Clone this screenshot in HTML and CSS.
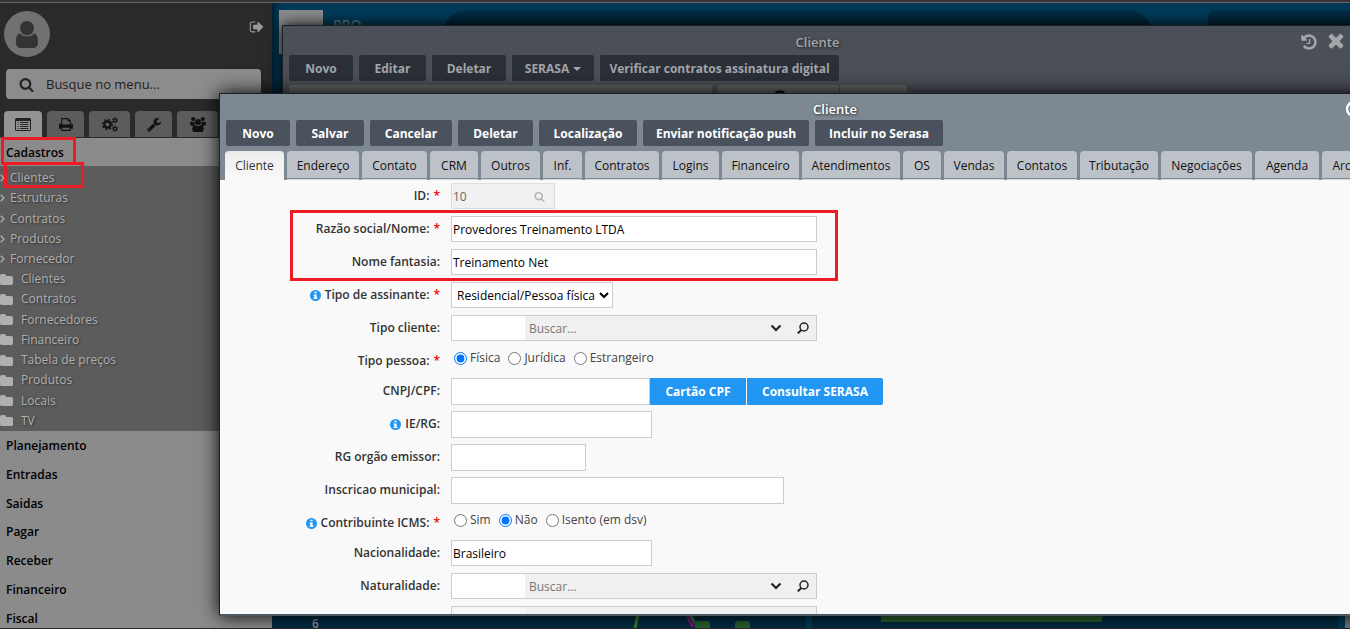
FILE: index.html
```html
<!DOCTYPE html>
<html lang="pt-BR">
<head>
<meta charset="utf-8">
<meta name="viewport" content="width=device-width, initial-scale=1">
<title>Cliente</title>
<link rel="stylesheet" href="styles.css">
</head>
<body>
<svg class="sprite" aria-hidden="true">
  <symbol id="i-history" viewBox="0 0 1792 1792"><path d="M1664 896q0 156-61 298t-164 245-245 164-298 61q-172 0-327-72.500t-264-204.500q-7-10-6.500-22.500t8.500-20.500l137-138q10-9 25-9 16 2 23 12 73 95 179 147t225 52q104 0 198.500-40.500t163.500-109.500 109.500-163.500 40.500-198.500-40.500-198.500-109.500-163.500-163.500-109.500-198.500-40.500q-98 0-188 35.500t-160 101.500l137 138q31 30 14 69-17 40-59 40h-448q-26 0-45-19t-19-45v-448q0-42 40-59 39-17 69 14l130 129q107-101 244.500-156.500t284.500-55.500q156 0 298 61t245 164 164 245 61 298zm-640-288v448q0 14-9 23t-23 9h-320q-14 0-23-9t-9-23v-64q0-14 9-23t23-9h224v-352q0-14 9-23t23-9h64q14 0 23 9t9 23z"/></symbol>
  <symbol id="i-times" viewBox="250 250 1292 1292"><path d="M1490 1194q0 40-28 68l-136 136q-28 28-68 28t-68-28l-294-294-294 294q-28 28-68 28t-68-28l-136-136q-28-28-28-68t28-68l294-294-294-294q-28-28-28-68t28-68l136-136q28-28 68-28t68 28l294 294 294-294q28-28 68-28t68 28l136 136q28 28 28 68t-28 68l-294 294 294 294q28 28 28 68z"/></symbol>
  <symbol id="i-help" viewBox="0 0 18 18"><g fill="none" stroke="currentColor" stroke-width="2.400"><circle cx="9" cy="9" r="7"/><path d="M6.700 7.200Q7 5.200 9 5.200t2.200 1.800Q11.200 8.600 9 9.400v1"/></g><circle cx="9" cy="12.500" r="1.200"/></symbol>
  <symbol id="i-signout" viewBox="0 200 1700 1400"><path d="M704 1440q0 4 1 20t.5 26.500-3 23.500-10 19.500-20.500 6.500h-320q-119 0-203.500-84.500t-84.500-203.500v-704q0-119 84.500-203.500t203.500-84.500h320q13 0 22.500 9.500t9.500 22.500q0 4 1 20t.5 26.500-3 23.500-10 19.500-20.500 6.500h-320q-66 0-113 47t-47 113v704q0 66 47 113t113 47h312l11.500 1 11.500 3 8 5.500 7 9 2 13.500zm928-544q0 26-19 45l-544 544q-19 19-45 19t-45-19-19-45v-288h-448q-26 0-45-19t-19-45v-384q0-26 19-45t45-19h448v-288q0-26 19-45t45-19 45 19l544 544q19 19 19 45z"/></symbol>
  <symbol id="i-search" viewBox="0 0 1792 1792"><path d="M1216 832q0-185-131.500-316.500t-316.500-131.500-316.500 131.500-131.500 316.500 131.500 316.500 316.500 131.500 316.500-131.500 131.500-316.500zm512 832q0 52-38 90t-90 38q-54 0-90-38l-343-342q-179 124-399 124-143 0-273.500-55.500t-225-150-150-225-55.500-273.500 55.500-273.500 150-225 225-150 273.500-55.500 273.500 55.500 225 150 150 225 55.500 273.500q0 220-124 399l343 343q37 37 37 90z"/></symbol>
  <symbol id="i-print" viewBox="0 0 1792 1792"><path d="M448 1536h896v-256h-896v256zm0-640h896v-384h-160q-40 0-68-28t-28-68v-160h-640v640zm1152 64q0-26-19-45t-45-19-45 19-19 45 19 45 45 19 45-19 19-45zm128 0v416q0 13-9.500 22.500t-22.500 9.500h-224v160q0 40-28 68t-68 28h-960q-40 0-68-28t-28-68v-160h-224q-13 0-22.500-9.500t-9.500-22.500v-416q0-79 56.500-135.500t135.500-56.500h64v-544q0-40 28-68t68-28h672q40 0 88 20t76 48l152 152q28 28 48 76t20 88v256h64q79 0 135.500 56.500t56.500 135.500z"/></symbol>
  <symbol id="i-wrench" viewBox="0 0 1792 1792"><path d="M448 1472q0-26-19-45t-45-19-45 19-19 45 19 45 45 19 45-19 19-45zm644-420l-682 682q-37 37-90 37-52 0-91-37l-106-108q-38-36-38-90 0-53 38-91l681-681q39 98 114.500 173.500t173.500 114.500zm634-435q0 39-23 106-47 134-164.500 217.500t-258.500 83.500q-185 0-316.500-131.500t-131.500-316.500 131.500-316.500 316.500-131.500q58 0 121.500 16.500t107.500 46.500q16 11 16 28t-16 28l-293 169v224l193 107q5-3 79-48.500t135.500-81 70.500-35.500q15 0 23.500 10t8.500 25z"/></symbol>
  <symbol id="i-folder" viewBox="64 128 1664 1408"><path d="M1728 608v704q0 92-66 158t-158 66h-1216q-92 0-158-66t-66-158v-960q0-92 66-158t158-66h320q92 0 158 66t66 158v32h672q92 0 158 66t66 158z"/></symbol>
  <symbol id="i-list" viewBox="0 0 16 13"><path fill-rule="evenodd" d="M1.500 0h13A1.500 1.500 0 0 1 16 1.500v10a1.500 1.500 0 0 1-1.500 1.500h-13A1.500 1.500 0 0 1 0 11.500v-10A1.500 1.500 0 0 1 1.500 0zM1 3v8.500q0 .5.500.5h13q.5 0 .5-.5V3z"/><path d="M2.500 4h1v1h-1zM2.500 6h1v1h-1zM2.500 8h1v1h-1zM2.500 10h1v1h-1zM5 4h8.500v1H5zM5 6h8.500v1H5zM5 8h8.500v1H5zM5 10h8.500v1H5z"/></symbol>
  <symbol id="i-cogs" viewBox="0 0 16 15"><g fill="none" stroke="currentColor"><circle cx="5.500" cy="7.500" r="3.200" stroke-width="2.200"/><circle cx="5.500" cy="7.500" r="4.900" stroke-width="1.500" stroke-dasharray="1.900 1.950"/><circle cx="13" cy="3.200" r="1.600" stroke-width="1.200"/><circle cx="13" cy="3.200" r="2.500" stroke-width="1" stroke-dasharray="1.300 1.320"/><circle cx="13" cy="11.800" r="1.600" stroke-width="1.200"/><circle cx="13" cy="11.800" r="2.500" stroke-width="1" stroke-dasharray="1.300 1.320"/></g></symbol>
  <symbol id="i-users" viewBox="0 0 16 15"><circle cx="3.200" cy="2.100" r="2.100"/><circle cx="12.800" cy="2.100" r="2.100"/><circle cx="8" cy="5" r="3"/><path d="M0 7.300C0 5.500.5 4.500 1.500 4.500q1.700 1 2.900.1Q4.200 6.500 5.200 7.700 3.800 7.600 3 8.800H1.500Q0 8.700 0 7.300zM16 7.300c0-1.800-.5-2.800-1.500-2.800q-1.700 1-2.900.1.200 1.900-.8 3.100 1.400-.1 2.200 1.100h1.500q1.500-.1 1.500-1.500zM2.300 12.700c0-2.700.6-4.600 2.600-4.600Q8 10 11.100 8.100c2 0 2.600 1.900 2.600 4.600Q13.700 15 11.500 15h-7q-2.200 0-2.200-2.300z"/></symbol>
  <symbol id="i-user" viewBox="0 0 22 27"><circle cx="11" cy="7" r="7"/><path d="M0 21C0 15.500 1.500 12 5.200 12q5.800 4 11.600 0C20.500 12 22 15.500 22 21q0 6-5 6H5q-5 0-5-6z"/><path d="M4 12.500q7 5 14 0" fill="none" stroke="#717171" stroke-width="1.200"/></symbol>
  <symbol id="i-chevron" viewBox="0 0 12 8"><path d="M1.500 1.500 6 6l4.500-4.500" fill="none" stroke="currentColor" stroke-width="2.200"/></symbol>
  <symbol id="i-lookup" viewBox="0 0 12 12"><g fill="none" stroke="currentColor"><circle cx="7" cy="5" r="4" stroke-width="1.500"/><path d="M4.200 8 .8 11.400" stroke-width="2"/></g></symbol>
  <symbol id="i-angle" viewBox="0 0 5 8"><path d="M.7.7 4 4 .7 7.300" fill="none" stroke="currentColor" stroke-width="1.300"/></symbol>
  <symbol id="i-caret" viewBox="0 0 8 4"><path d="M0 0h8L4 4z"/></symbol>
  <symbol id="i-info" viewBox="0 0 10 10"><circle cx="5" cy="5" r="5" fill="#2196f3"/><path fill="#fff" d="M4 1.500h2V3H4zM3.300 4H6v3h.7v1.200H3.300V7H4V5.200h-.7z"/></symbol>
</svg>

<div class="app">
  <aside class="sidebar">
    <div class="profile">
      <span class="avatar"><svg><use href="#i-user"/></svg></span>
      <button class="logout" type="button" aria-label="Sair"><svg><use href="#i-signout"/></svg></button>
    </div>
    <label class="menu-search">
      <svg><use href="#i-search"/></svg>
      <input type="text" placeholder="Busque no menu..." aria-label="Busque no menu">
    </label>
    <div class="menu-tabs">
      <button class="active" type="button" aria-label="Menu"><svg class="list-icon"><use href="#i-list"/></svg></button>
      <button type="button" aria-label="Imprimir"><svg><use href="#i-print"/></svg></button>
      <button type="button" aria-label="Configurações"><svg><use href="#i-cogs"/></svg></button>
      <button type="button" aria-label="Ferramentas"><svg><use href="#i-wrench"/></svg></button>
      <button type="button" aria-label="Usuários"><svg><use href="#i-users"/></svg></button>
    </div>
    <nav class="menu">
      <a class="section" href="#">Cadastros</a>
      <ul class="submenu">
        <li><a href="#"><svg class="angle"><use href="#i-angle"/></svg>Clientes</a></li>
        <li><a href="#"><svg class="angle"><use href="#i-angle"/></svg>Estruturas</a></li>
        <li><a href="#"><svg class="angle"><use href="#i-angle"/></svg>Contratos</a></li>
        <li><a href="#"><svg class="angle"><use href="#i-angle"/></svg>Produtos</a></li>
        <li><a href="#"><svg class="angle"><use href="#i-angle"/></svg>Fornecedor</a></li>
        <li><a href="#"><svg class="folder"><use href="#i-folder"/></svg>Clientes</a></li>
        <li><a href="#"><svg class="folder"><use href="#i-folder"/></svg>Contratos</a></li>
        <li><a href="#"><svg class="folder"><use href="#i-folder"/></svg>Fornecedores</a></li>
        <li><a href="#"><svg class="folder"><use href="#i-folder"/></svg>Financeiro</a></li>
        <li><a href="#"><svg class="folder"><use href="#i-folder"/></svg>Tabela de preços</a></li>
        <li><a href="#"><svg class="folder"><use href="#i-folder"/></svg>Produtos</a></li>
        <li><a href="#"><svg class="folder"><use href="#i-folder"/></svg>Locais</a></li>
        <li><a href="#"><svg class="folder"><use href="#i-folder"/></svg>TV</a></li>
      </ul>
      <div class="sections">
        <a class="section" href="#">Planejamento</a>
        <a class="section" href="#">Entradas</a>
        <a class="section" href="#">Saidas</a>
        <a class="section" href="#">Pagar</a>
        <a class="section" href="#">Receber</a>
        <a class="section" href="#">Financeiro</a>
        <a class="section" href="#">Fiscal</a>
      </div>
    </nav>
  </aside>

  <main class="dashboard">
    <header class="dash-top">
      <span class="logo"></span>
      <span class="brand">PRO —</span>
      <span class="dash-search"></span>
      <span class="dash-card"></span>
    </header>
    <footer class="dash-bottom">
      <span class="axis">6</span>
      <svg class="chart" viewBox="0 0 190 14"><path d="M2 14 5 0" stroke="#3f7f34" stroke-width="3"/><path d="m54 0 6 13" stroke="#6b1d72" stroke-width="4"/><path d="m57 0 5 9" stroke="#3f7f34" stroke-width="2"/><rect x="62" y="7" width="15" height="9" rx="3" fill="#2c6330"/><rect x="102" y="7" width="15" height="9" rx="3" fill="#2c6330"/><path d="M173 0h6v14h-6z" fill="#003d5e"/></svg>
      <span class="bar"></span>
      <span class="edge"></span>
    </footer>
  </main>

  <section class="window window-back" aria-label="Lista de clientes">
    <header class="title-bar">
      <h2>Cliente</h2>
      <div class="window-actions">
        <button type="button" aria-label="Histórico"><svg><use href="#i-history"/></svg></button>
        <button type="button" aria-label="Fechar"><svg><use href="#i-times"/></svg></button>
      </div>
    </header>
    <div class="toolbar">
      <button type="button">Novo</button>
      <button type="button">Editar</button>
      <button type="button">Deletar</button>
      <button type="button">SERASA <svg class="caret"><use href="#i-caret"/></svg></button>
      <button type="button">Verificar contratos assinatura digital</button>
    </div>
    <div class="filters"><span></span><span class="filter-icon"><svg><use href="#i-search"/></svg></span><span></span></div>
  </section>

  <section class="window window-front" aria-label="Cadastro de cliente">
    <header class="title-bar">
      <h1>Cliente</h1>
      <div class="window-actions">
        <button type="button" aria-label="Ajuda"><svg><use href="#i-help"/></svg></button>
        <button type="button" aria-label="Fechar cadastro"><svg><use href="#i-times"/></svg></button>
      </div>
    </header>
    <div class="toolbar">
      <button type="button">Novo</button>
      <button type="button">Salvar</button>
      <button type="button">Cancelar</button>
      <button type="button">Deletar</button>
      <button type="button">Localização</button>
      <button type="button">Enviar notificação push</button>
      <button type="button">Incluir no Serasa</button>
    </div>
    <div class="tabs">
      <button class="active" type="button">Cliente</button>
      <button type="button">Endereço</button>
      <button type="button">Contato</button>
      <button type="button">CRM</button>
      <button type="button">Outros</button>
      <button type="button">Inf.</button>
      <button type="button">Contratos</button>
      <button type="button">Logins</button>
      <button type="button">Financeiro</button>
      <button type="button">Atendimentos</button>
      <button type="button">OS</button>
      <button type="button">Vendas</button>
      <button type="button">Contatos</button>
      <button type="button">Tributação</button>
      <button type="button">Negociações</button>
      <button type="button">Agenda</button>
      <button type="button">Arquivos</button>
    </div>
    <form class="form">
      <div class="row">
        <label for="id">ID: <b class="req">*</b></label>
        <span class="id-field"><input id="id" type="text" value="10" readonly><svg><use href="#i-search"/></svg></span>
      </div>
      <div class="row">
        <label for="razao">Razão social/Nome: <b class="req">*</b></label>
        <input id="razao" class="w-long" type="text" value="Provedores Treinamento LTDA">
      </div>
      <div class="row">
        <label for="fantasia">Nome fantasia:</label>
        <input id="fantasia" class="w-long" type="text" value="Treinamento Net">
      </div>
      <div class="row">
        <label for="assinante"><svg class="info"><use href="#i-info"/></svg>Tipo de assinante: <b class="req">*</b></label>
        <select id="assinante"><option>Residencial/Pessoa física</option></select>
      </div>
      <div class="row">
        <label for="tipo">Tipo cliente:</label>
        <div class="lookup"><input id="tipo" type="text"><input class="find" type="text" placeholder="Buscar..." aria-label="Buscar tipo cliente"><button type="button" aria-label="Abrir lista"><svg class="chev"><use href="#i-chevron"/></svg></button><button type="button" aria-label="Pesquisar"><svg><use href="#i-lookup"/></svg></button></div>
      </div>
      <div class="row row-radio" role="radiogroup" aria-labelledby="l-pessoa">
        <span class="label" id="l-pessoa">Tipo pessoa: <b class="req">*</b></span>
        <div class="radios">
          <label><input type="radio" name="pessoa" checked>Física</label>
          <label><input type="radio" name="pessoa">Jurídica</label>
          <label><input type="radio" name="pessoa">Estrangeiro</label>
        </div>
      </div>
      <div class="row tall">
        <label for="cpf">CNPJ/CPF:</label>
        <div class="group"><input id="cpf" class="w-mid" type="text"><button type="button">Cartão CPF</button><button type="button">Consultar SERASA</button></div>
      </div>
      <div class="row tall">
        <label for="ie"><svg class="info"><use href="#i-info"/></svg>IE/RG:</label>
        <input id="ie" class="w-mid" type="text">
      </div>
      <div class="row tall">
        <label for="rg">RG orgão emissor:</label>
        <input id="rg" class="w-short" type="text">
      </div>
      <div class="row tall">
        <label for="insc">Inscricao municipal:</label>
        <input id="insc" class="w-wide" type="text">
      </div>
      <div class="row row-radio" role="radiogroup" aria-labelledby="l-icms">
        <span class="label" id="l-icms"><svg class="info"><use href="#i-info"/></svg>Contribuinte ICMS: <b class="req">*</b></span>
        <div class="radios">
          <label><input type="radio" name="icms">Sim</label>
          <label><input type="radio" name="icms" checked>Não</label>
          <label><input type="radio" name="icms">Isento (em dsv)</label>
        </div>
      </div>
      <div class="row">
        <label for="nac">Nacionalidade:</label>
        <input id="nac" class="w-mid" type="text" value="Brasileiro">
      </div>
      <div class="row">
        <label for="nat">Naturalidade:</label>
        <div class="lookup"><input id="nat" type="text"><input class="find" type="text" placeholder="Buscar..." aria-label="Buscar naturalidade"><button type="button" aria-label="Abrir lista de cidades"><svg class="chev"><use href="#i-chevron"/></svg></button><button type="button" aria-label="Pesquisar cidade"><svg><use href="#i-lookup"/></svg></button></div>
      </div>
      <div class="row">
        <span></span>
        <div class="lookup locked"><input type="text" aria-label="Código" disabled><input class="find" type="text" aria-label="Descrição" disabled></div>
      </div>
    </form>
  </section>

  <span class="mark mark-section"></span>
  <span class="mark mark-item"></span>
  <span class="mark mark-names"></span>
</div>
</body>
</html>
```
FILE: styles.css
```css
* { box-sizing: border-box; }

body {
  margin: 0;
  overflow: hidden;
  border-top: 2px solid #343434;
  background: #222;
  font: 12px/16px "Open Sans", "Noto Sans", sans-serif;
  color: #333;
}

button, input, select { font: inherit; color: inherit; }
button { border: 0; background: none; padding: 0; cursor: pointer; white-space: nowrap; }
a { color: inherit; text-decoration: none; }
svg { display: block; flex: none; fill: currentColor; width: 16px; height: 16px; }
.sprite { position: absolute; width: 0; height: 0; }

.app {
  position: relative;
  display: flex;
  height: calc(100vh - 2px);
  overflow: hidden;
  border-top: 1px solid #6c6868;
  border-bottom: 1px solid #262626;
}

/* Sidebar */
.sidebar {
  display: flex;
  flex-direction: column;
  width: 272px;
  flex: none;
  background: #2a2a2a;
}
.profile {
  display: flex;
  flex: none;
  justify-content: space-between;
  align-items: flex-start;
  padding: 8px 8px 0 4px;
  height: 66px;
}
.avatar {
  display: grid;
  place-items: center;
  width: 46px;
  height: 46px;
  border-radius: 50%;
  background: #717171;
  color: #333;
}
.avatar svg { width: 22px; height: 27px; }
.logout { margin-top: 10px; color: #999; }
.logout svg { width: 15px; height: 12px; }
.menu-search {
  display: flex;
  flex: none;
  align-items: center;
  gap: 12px;
  height: 30px;
  margin: 0 11px 0 6px;
  padding-left: 13px;
  border-radius: 4px;
  background: #8c8c8c;
  color: #222;
}
.menu-search svg { width: 15px; height: 15px; }
.menu-search input { width: 100%; border: 0; padding: 0; background: none; outline: 0; font-size: 13px; }
.menu-search input::placeholder { color: #222; opacity: 1; }
.menu-tabs {
  display: grid;
  flex: none;
  grid-template-columns: 38px 37px 41px 37px 41px;
  gap: 5px;
  height: 39px;
  padding: 12px 0 1px 4px;
}
.menu-tabs button {
  display: grid;
  place-items: center;
  border-radius: 4px 4px 0 0;
  background: #5c5c5c;
  color: #111;
}
.menu-tabs .active { background: #949494; color: #222; }
.menu-tabs svg { width: 16px; height: 15px; }
.menu-tabs .list-icon { height: 13px; }
.menu { flex: 1; background: #8b8b8b; }
.section {
  display: flex;
  align-items: center;
  padding: 2px 0 0 6px;
  font-weight: 600;
  color: #000;
}
.menu > .section { height: 28px; }
.submenu {
  display: grid;
  grid-auto-rows: 1fr;
  height: 265px;
  margin: 0;
  padding: 2px 0 0;
  list-style: none;
  background: #5c5c5c;
  color: #b0b0b0;
}
.submenu li { display: grid; }
.submenu a { display: flex; align-items: center; text-shadow: 1px 1px 2px #333; }
.submenu .angle { width: 5px; height: 8px; margin-right: 5px; }
.submenu .folder { width: 13px; height: 11px; margin-right: 8px; }
.sections { display: grid; grid-auto-rows: 1fr; height: 201px; }

/* Dashboard behind the windows */
.dashboard {
  display: flex;
  flex: 1;
  flex-direction: column;
  justify-content: space-between;
  min-width: 0;
  background: #003b5a;
}
.dash-top {
  display: flex;
  gap: 10px;
  height: 100px;
  padding: 7px 0 0 7px;
  box-shadow: inset 7px 0 7px -4px #001c2c;
}
.logo { width: 44px; height: 44px; background: #8b8b8b; }
.brand { width: 100px; padding-top: 7px; font-size: 14px; font-weight: 600; color: #5c7685; }
.dash-search { flex: 1; height: 60px; border-radius: 24px 24px 0 0; background: linear-gradient(#003049, #001a29 20px); }
.dash-card { width: 142px; margin-left: 46px; border-radius: 6px 0 0 0; background: linear-gradient(#003049, #001a29 20px); }
.dash-bottom {
  display: flex;
  gap: 8px;
  height: 14px;
  padding-left: 7px;
  overflow: hidden;
  background: #002b42;
}
.axis { width: 346px; padding-left: 33px; line-height: 20px; font-weight: 600; color: #8899a3; }
.chart { width: 190px; height: 14px; }
.bar { width: 221px; height: 8px; margin-left: 50px; background: #2c6330; }
.edge { width: 12px; margin-left: auto; background: linear-gradient(90deg, #003b5a 7px, #777 7px); }

/* Windows */
.window { position: absolute; display: flex; flex-direction: column; overflow: hidden; border: 1px solid #1c2025; }
.window > * { flex: none; }
.window-back { top: 22px; left: 282px; right: -8px; height: 560px; background: #4b4f57; color: #a3a5a8; box-shadow: 0 0 14px #000; }
.window-front { top: 90px; left: 219px; right: -101px; bottom: 12px; background: #f9f9f9; border-width: 1px 1px 2px; border-bottom-color: #4e5860; box-shadow: 0 0 18px #000; }

.title-bar {
  display: grid;
  grid-template-columns: 1fr auto 1fr;
  align-items: center;
}
.title-bar h1, .title-bar h2 { grid-column: 2; margin: 0; font-size: 13px; font-weight: 600; line-height: 18px; text-shadow: 1px 1px 3px #222; }
.window-actions { display: flex; justify-content: flex-end; gap: 10px; }
.window-actions svg { width: 18px; height: 18px; }
.window-actions button:last-child svg { width: 16px; height: 18px; }
.window-back .title-bar { height: 29px; padding: 3px 13px 0 8px; }

.toolbar { display: grid; gap: 6px; }
.toolbar button {
  display: flex;
  align-items: center;
  justify-content: center;
  gap: 4px;
  height: 26px;
  padding-top: 1px;
  border-radius: 2px;
  font-weight: 700;
}
.window-back .toolbar { grid-template-columns: 64px 67px 74px 82px 239px; padding-left: 6px; }
.window-back .toolbar button { background: #2b3038; }
.toolbar .caret { width: 8px; height: 4px; }
.filters { display: grid; grid-template-columns: 423px 126px 67px; column-gap: 1px; padding: 4px 0 0 6px; }
.filters span { height: 20px; background: #626466; border-radius: 2px 2px 0 0; }
.filters .filter-icon { margin-left: 5px; padding: 4px 0 0 55px; color: #000; }

.window-front .title-bar { height: 26px; padding: 4px 61px 0; background: #7e8892; color: #fff; }
.window-front .toolbar {
  grid-template-columns: 64px 68px 82px 75px 98px 166px 128px;
  padding-left: 6px;
  background: #7e8892;
  color: #fff;
}
.window-front .toolbar button { background: #49525d; }
.tabs {
  display: grid;
  grid-template-columns: 59px 72px 65px 48px 59px 39px 74px 57px 77px 98px 38px 60px 70px 78px 91px 64px 70px;
  column-gap: 3px;
  height: 34px;
  padding: 5px 0 0 5px;
  background: #7e8892;
}
.tabs button {
  border-radius: 4px 4px 0 0;
  background: linear-gradient(#bdc2c9 27px, #7e8892 27px, #7e8892 28px, #d5d8dc 28px);
  color: #111;
}
.tabs .active { background: linear-gradient(#ececec, #f9f9f9); color: #333; }

/* Form */
.form { padding-top: 3px; }
.row { display: grid; grid-template-columns: 220px 1fr; column-gap: 11px; align-items: start; justify-items: start; height: 33px; }
.row-radio { height: 30px; }
.row > label, .row > .label {
  display: flex;
  align-items: center;
  justify-content: flex-end;
  gap: 4px;
  width: 100%;
  height: 26px;
  font-weight: 600;
}
.req { color: #e00; font-weight: 600; }
.info { width: 11px; height: 11px; }
.form input[type="text"], .form select {
  height: 26px;
  border: 1px solid #ccc;
  border-radius: 0;
  padding: 0 1px;
  background: #fff;
  color: #000;
  outline: 0;
}
.form .tall input[type="text"] { height: 27px; }
.form select { min-width: 158px; }
.w-long { width: 366px; }
.w-mid { width: 201px; }
.w-short { width: 135px; }
.w-wide { width: 333px; }
.id-field { display: flex; align-items: center; width: 104px; height: 26px; border: 1px solid #ddd; background: #f1f1f1; color: #b5b5b5; }
.form .id-field input { flex: 1; min-width: 0; border: 0; background: none; color: #666; height: 24px; }
.id-field svg { width: 11px; height: 11px; margin-right: 9px; }
.lookup { display: flex; align-items: center; width: 366px; height: 26px; border: 1px solid #ccc; background: #f0f0f0; }
.form .lookup input { width: 73px; height: 24px; border: 0; }
.form .lookup .find { flex: 1; padding-left: 4px; background: none; min-width: 0; }
.lookup .find::placeholder { color: #777; opacity: 1; }
.lookup button { width: 27px; height: 24px; display: grid; place-items: center; color: #222; }
.lookup svg { width: 12px; height: 12px; }
.lookup .chev { height: 8px; }
.form .locked input { background: #f6f6f6; }
.radios { display: flex; gap: 8px; padding: 2px 0 0 3px; color: #444; }
.radios label { display: flex; align-items: center; gap: 3px; }
.radios input { width: 13px; height: 13px; margin: 0; accent-color: #0075ff; }
.group { display: flex; }
.group .w-mid { width: 199px; border-right: 0; }
.group button { width: 96px; height: 27px; background: #2196f3; color: #fff; font-weight: 700; }
.group button + button { width: 136px; margin-left: 1px; border-radius: 0 2px 2px 0; }

/* Highlight frames laid over the screen */
.mark { position: absolute; border: 3px solid #ed1c24; pointer-events: none; }
.mark-section { top: 134px; left: 1px; width: 75px; height: 28px; }
.mark-item { top: 159px; left: 4px; width: 80px; height: 26px; }
.mark-names { top: 207px; left: 290px; width: 548px; height: 71px; }
```
